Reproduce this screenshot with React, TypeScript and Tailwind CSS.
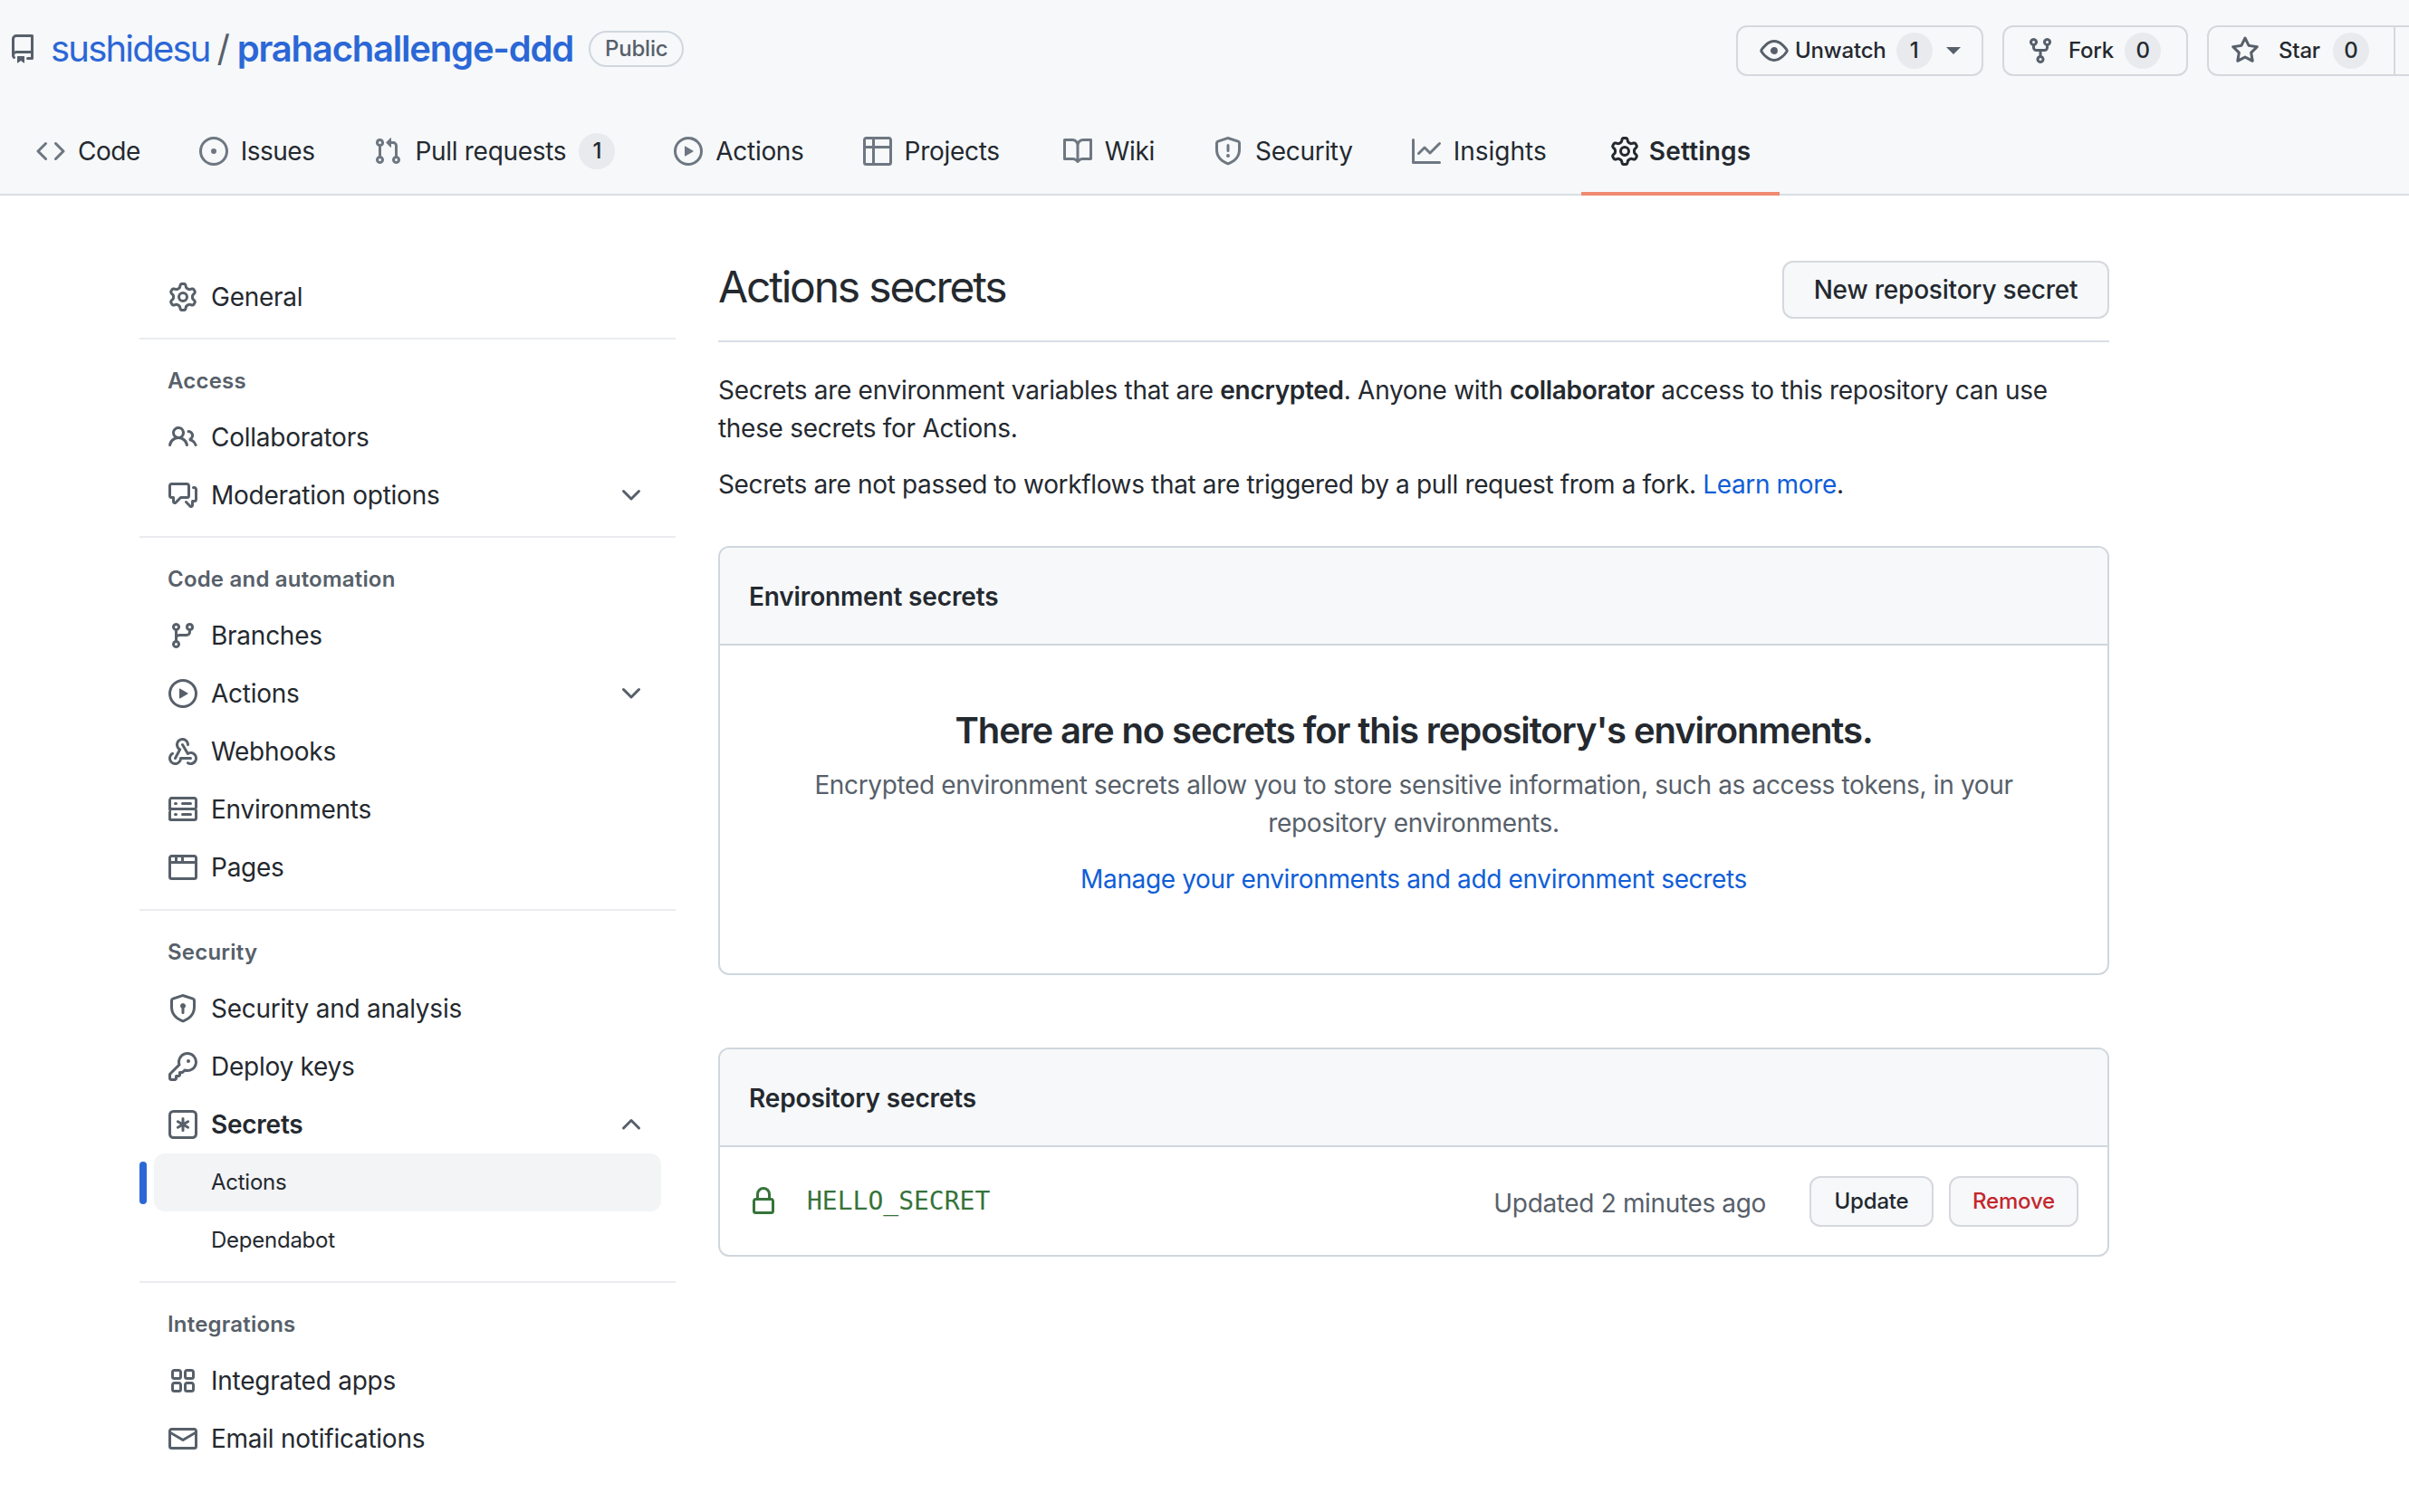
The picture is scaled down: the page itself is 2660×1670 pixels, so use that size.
import React from 'react';

const paths: Record<string, string> = {
  repo: 'M2 2.5A2.5 2.5 0 0 1 4.5 0h8.75a.75.75 0 0 1 .75.75v12.5a.75.75 0 0 1-.75.75h-2.5a.75.75 0 0 1 0-1.5h1.75v-2h-8a1 1 0 0 0-.714 1.7.75.75 0 1 1-1.072 1.05A2.495 2.495 0 0 1 2 11.5Zm10.5-1h-8a1 1 0 0 0-1 1v6.708A2.486 2.486 0 0 1 4.5 9h8ZM5 12.25a.25.25 0 0 1 .25-.25h3.5a.25.25 0 0 1 .25.25v3.25a.25.25 0 0 1-.4.2l-1.45-1.087a.249.249 0 0 0-.3 0L5.4 15.7a.25.25 0 0 1-.4-.2Z',
  code: 'm11.28 3.22 4.25 4.25a.75.75 0 0 1 0 1.06l-4.25 4.25a.749.749 0 0 1-1.275-.326.749.749 0 0 1 .215-.734L13.94 8l-3.72-3.72a.749.749 0 0 1 .326-1.275.749.749 0 0 1 .734.215Zm-6.56 0a.751.751 0 0 1 1.042.018.751.751 0 0 1 .018 1.042L2.06 8l3.72 3.72a.749.749 0 0 1-.326 1.275.749.749 0 0 1-.734-.215L.47 8.53a.75.75 0 0 1 0-1.06Z',
  issue: 'M8 9.5a1.5 1.5 0 1 0 0-3 1.5 1.5 0 0 0 0 3Z M8 0a8 8 0 1 1 0 16A8 8 0 0 1 8 0ZM1.5 8a6.5 6.5 0 1 0 13 0 6.5 6.5 0 0 0-13 0Z',
  pull: 'M1.5 3.25a2.25 2.25 0 1 1 3 2.122v5.256a2.251 2.251 0 1 1-1.5 0V5.372A2.25 2.25 0 0 1 1.5 3.25Zm5.677-.177L9.573.677A.25.25 0 0 1 10 .854V2.5h1A2.5 2.5 0 0 1 13.5 5v5.628a2.251 2.251 0 1 1-1.5 0V5a1 1 0 0 0-1-1h-1v1.646a.25.25 0 0 1-.427.177L7.177 3.427a.25.25 0 0 1 0-.354ZM3.75 2.5a.75.75 0 1 0 0 1.5.75.75 0 0 0 0-1.5Zm0 9.5a.75.75 0 1 0 0 1.5.75.75 0 0 0 0-1.5Zm8.25.75a.75.75 0 1 0 1.5 0 .75.75 0 0 0-1.5 0Z',
  play: 'M8 0a8 8 0 1 1 0 16A8 8 0 0 1 8 0ZM1.5 8a6.5 6.5 0 1 0 13 0 6.5 6.5 0 0 0-13 0Zm4.879-2.773 4.264 2.559a.25.25 0 0 1 0 .428l-4.264 2.559A.25.25 0 0 1 6 10.559V5.442a.25.25 0 0 1 .379-.215Z',
  table: 'M0 1.75C0 .784.784 0 1.75 0h12.5C15.216 0 16 .784 16 1.75v12.5A1.75 1.75 0 0 1 14.25 16H1.75A1.75 1.75 0 0 1 0 14.25ZM6.5 6.5v8h7.75a.25.25 0 0 0 .25-.25V6.5Zm8-1.5V1.75a.25.25 0 0 0-.25-.25H6.5V5Zm-13 1.5v7.75c0 .138.112.25.25.25H5v-8ZM5 5V1.5H1.75a.25.25 0 0 0-.25.25V5Z',
  book: 'M0 1.75A.75.75 0 0 1 .75 1h4.253c1.227 0 2.317.59 3 1.501A3.743 3.743 0 0 1 11.006 1h4.245a.75.75 0 0 1 .75.75v10.5a.75.75 0 0 1-.75.75h-4.507a2.25 2.25 0 0 0-1.591.659l-.622.621a.75.75 0 0 1-1.06 0l-.622-.621A2.25 2.25 0 0 0 5.258 13H.75a.75.75 0 0 1-.75-.75Zm7.251 10.324.004-5.073-.002-2.253A2.25 2.25 0 0 0 5.003 2.5H1.5v9h3.757a3.75 3.75 0 0 1 1.994.574ZM8.755 4.75l-.004 7.322a3.752 3.752 0 0 1 1.992-.572H14.5v-9h-3.495a2.25 2.25 0 0 0-2.25 2.25Z',
  shield: 'M7.467.133a1.748 1.748 0 0 1 1.066 0l5.25 1.68A1.75 1.75 0 0 1 15 3.48V7c0 1.566-.32 3.182-1.303 4.682-.983 1.498-2.585 2.813-5.032 3.855a1.697 1.697 0 0 1-1.33 0c-2.447-1.042-4.049-2.357-5.032-3.855C1.32 10.182 1 8.566 1 7V3.48a1.75 1.75 0 0 1 1.217-1.667Zm.61 1.429a.25.25 0 0 0-.153 0l-5.25 1.68a.25.25 0 0 0-.174.238V7c0 1.358.275 2.666 1.057 3.86.784 1.194 2.121 2.34 4.366 3.297a.196.196 0 0 0 .154 0c2.245-.956 3.582-2.104 4.366-3.298C13.225 9.666 13.5 8.36 13.5 7V3.48a.251.251 0 0 0-.174-.237l-5.25-1.68ZM8.75 4.75v3a.75.75 0 0 1-1.5 0v-3a.75.75 0 0 1 1.5 0ZM9 10.5a1 1 0 1 1-2 0 1 1 0 0 1 2 0Z',
  graph: 'M1.5 1.75V13.5h13.75a.75.75 0 0 1 0 1.5H.75a.75.75 0 0 1-.75-.75V1.75a.75.75 0 0 1 1.5 0Zm14.28 2.53-5.25 5.25a.75.75 0 0 1-1.06 0L7 7.06 4.28 9.78a.751.751 0 0 1-1.042-.018.751.751 0 0 1-.018-1.042l3.25-3.25a.75.75 0 0 1 1.06 0L10 7.94l4.72-4.72a.751.751 0 0 1 1.042.018.751.751 0 0 1 .018 1.042Z',
  gear: 'M8 0a8.2 8.2 0 0 1 .701.031C9.444.095 9.99.645 10.16 1.29l.288 1.107c.018.066.079.158.212.224.231.114.454.243.668.386.123.082.233.09.299.071l1.103-.303c.644-.176 1.392.021 1.82.63.27.385.506.792.704 1.218.315.675.111 1.422-.364 1.891l-.814.806c-.049.048-.098.147-.088.294.016.257.016.515 0 .772-.01.147.038.246.088.294l.814.806c.475.469.679 1.216.364 1.891a7.977 7.977 0 0 1-.704 1.217c-.428.61-1.176.807-1.82.63l-1.102-.302c-.067-.019-.177-.011-.3.071a5.909 5.909 0 0 1-.668.386c-.133.066-.194.158-.211.224l-.29 1.106c-.168.646-.715 1.196-1.458 1.26a8.006 8.006 0 0 1-1.402 0c-.743-.064-1.289-.614-1.458-1.26l-.289-1.106c-.018-.066-.079-.158-.212-.224a5.738 5.738 0 0 1-.668-.386c-.123-.082-.233-.09-.299-.071l-1.103.303c-.644.176-1.392-.021-1.82-.63a8.12 8.12 0 0 1-.704-1.218c-.315-.675-.111-1.422.363-1.891l.815-.806c.05-.048.098-.147.088-.294a6.214 6.214 0 0 1 0-.772c.01-.147-.038-.246-.088-.294l-.815-.806C.635 6.045.431 5.298.746 4.623a7.92 7.92 0 0 1 .704-1.217c.428-.61 1.176-.807 1.82-.63l1.102.302c.067.019.177.011.3-.071.214-.143.437-.272.668-.386.133-.066.194-.158.211-.224l.29-1.106C6.009.645 6.556.095 7.299.03 7.53.01 7.764 0 8 0Zm-.571 1.525c-.036.003-.108.036-.137.146l-.289 1.105c-.147.561-.549.967-.998 1.189-.173.086-.34.183-.5.29-.417.278-.97.423-1.529.27l-1.103-.303c-.109-.03-.175.016-.195.045-.22.312-.412.644-.573.99-.014.031-.021.11.059.19l.815.806c.411.406.562.957.53 1.456a4.709 4.709 0 0 0 0 .582c.032.499-.119 1.05-.53 1.456l-.815.806c-.081.08-.073.159-.059.19.162.346.353.677.573.989.02.03.085.076.195.046l1.102-.303c.56-.153 1.113-.008 1.53.27.161.107.328.204.501.29.447.222.85.629.997 1.189l.289 1.105c.029.109.101.143.137.146a6.6 6.6 0 0 0 1.142 0c.036-.003.108-.036.137-.146l.289-1.105c.147-.561.549-.967.998-1.189.173-.086.34-.183.5-.29.417-.278.97-.423 1.529-.27l1.103.303c.109.029.175-.016.195-.045.22-.313.411-.644.573-.99.014-.031.021-.11-.059-.19l-.815-.806c-.411-.406-.562-.957-.53-1.456a4.709 4.709 0 0 0 0-.582c-.032-.499.119-1.05.53-1.456l.815-.806c.081-.08.073-.159.059-.19a6.464 6.464 0 0 0-.573-.989c-.02-.03-.085-.076-.195-.046l-1.102.303c-.56.153-1.113.008-1.53-.27a4.44 4.44 0 0 0-.501-.29c-.447-.222-.85-.629-.997-1.189l-.289-1.105c-.029-.11-.101-.143-.137-.146a6.6 6.6 0 0 0-1.142 0ZM11 8a3 3 0 1 1-6 0 3 3 0 0 1 6 0ZM9.5 8a1.5 1.5 0 1 0-3.001.001A1.5 1.5 0 0 0 9.5 8Z',
  eye: 'M8 2c1.981 0 3.671.992 4.933 2.078 1.27 1.091 2.187 2.345 2.637 3.023a1.62 1.62 0 0 1 0 1.798c-.45.678-1.367 1.932-2.637 3.023C11.67 13.008 9.981 14 8 14c-1.981 0-3.671-.992-4.933-2.078C1.797 10.83.88 9.576.43 8.898a1.62 1.62 0 0 1 0-1.798c.45-.677 1.367-1.931 2.637-3.022C4.33 2.992 6.019 2 8 2ZM1.679 7.932a.12.12 0 0 0 0 .136c.411.622 1.241 1.75 2.366 2.717C5.176 11.758 6.527 12.5 8 12.5c1.473 0 2.825-.742 3.955-1.715 1.124-.967 1.954-2.096 2.366-2.717a.12.12 0 0 0 0-.136c-.412-.621-1.242-1.75-2.366-2.717C10.824 4.242 9.473 3.5 8 3.5c-1.473 0-2.825.742-3.955 1.715-1.124.967-1.954 2.096-2.366 2.717ZM8 10a2 2 0 1 1-.001-3.999A2 2 0 0 1 8 10Z',
  fork: 'M5 5.372v.878c0 .414.336.75.75.75h4.5a.75.75 0 0 0 .75-.75v-.878a2.25 2.25 0 1 1 1.5 0v.878a2.25 2.25 0 0 1-2.25 2.25h-1.5v2.128a2.251 2.251 0 1 1-1.5 0V8.5h-1.5A2.25 2.25 0 0 1 3.5 6.25v-.878a2.25 2.25 0 1 1 1.5 0ZM5 3.25a.75.75 0 1 0-1.5 0 .75.75 0 0 0 1.5 0Zm6.75.75a.75.75 0 1 0 0-1.5.75.75 0 0 0 0 1.5Zm-3 8.75a.75.75 0 1 0-1.5 0 .75.75 0 0 0 1.5 0Z',
  star: 'M8 .25a.75.75 0 0 1 .673.418l1.882 3.815 4.21.612a.75.75 0 0 1 .416 1.279l-3.046 2.97.719 4.192a.751.751 0 0 1-1.088.791L8 12.347l-3.766 1.98a.75.75 0 0 1-1.088-.79l.72-4.194L.818 6.374a.75.75 0 0 1 .416-1.28l4.21-.611L7.327.668A.75.75 0 0 1 8 .25Zm0 2.445L6.615 5.5a.75.75 0 0 1-.564.41l-3.097.45 2.24 2.184a.75.75 0 0 1 .216.664l-.528 3.084 2.769-1.456a.75.75 0 0 1 .698 0l2.77 1.456-.53-3.084a.75.75 0 0 1 .216-.664l2.24-2.183-3.096-.45a.75.75 0 0 1-.564-.41L8 2.694Z',
  people: 'M2 5.5a3.5 3.5 0 1 1 5.898 2.549 5.508 5.508 0 0 1 3.034 4.084.75.75 0 1 1-1.482.235 4 4 0 0 0-7.9 0 .75.75 0 0 1-1.482-.236A5.507 5.507 0 0 1 3.102 8.05 3.493 3.493 0 0 1 2 5.5ZM11 4a3.001 3.001 0 0 1 2.22 5.018 5.01 5.01 0 0 1 2.56 3.012.749.749 0 0 1-.885.954.752.752 0 0 1-.549-.514 3.507 3.507 0 0 0-2.522-2.372.75.75 0 0 1-.574-.73v-.352a.75.75 0 0 1 .416-.672A1.5 1.5 0 0 0 11 5.5.75.75 0 0 1 11 4Zm-5.5-.5a2 2 0 1 0-.001 3.999A2 2 0 0 0 5.5 3.5Z',
  discussion: 'M1.75 1h8.5c.966 0 1.75.784 1.75 1.75v5.5A1.75 1.75 0 0 1 10.25 10H7.061l-2.574 2.573A1.458 1.458 0 0 1 2 11.543V10h-.25A1.75 1.75 0 0 1 0 8.25v-5.5C0 1.784.784 1 1.75 1ZM1.5 2.75v5.5c0 .138.112.25.25.25h1a.75.75 0 0 1 .75.75v2.19l2.72-2.72a.749.749 0 0 1 .53-.22h3.5a.25.25 0 0 0 .25-.25v-5.5a.25.25 0 0 0-.25-.25h-8.5a.25.25 0 0 0-.25.25Zm13 2a.25.25 0 0 0-.25-.25h-.5a.75.75 0 0 1 0-1.5h.5c.966 0 1.75.784 1.75 1.75v5.5A1.75 1.75 0 0 1 14.25 12H14v1.543a1.458 1.458 0 0 1-2.487 1.03L9.22 12.28a.749.749 0 0 1 .326-1.275.749.749 0 0 1 .734.215l2.22 2.22v-2.19a.75.75 0 0 1 .75-.75h1a.25.25 0 0 0 .25-.25Z',
  branch: 'M9.5 3.25a2.25 2.25 0 1 1 3 2.122V6A2.5 2.5 0 0 1 10 8.5H6a1 1 0 0 0-1 1v1.128a2.251 2.251 0 1 1-1.5 0V5.372a2.25 2.25 0 1 1 1.5 0v1.836A2.493 2.493 0 0 1 6 7h4a1 1 0 0 0 1-1v-.628A2.25 2.25 0 0 1 9.5 3.25Zm-6 0a.75.75 0 1 0 1.5 0 .75.75 0 0 0-1.5 0Zm8.25-.75a.75.75 0 1 0 0 1.5.75.75 0 0 0 0-1.5ZM4.25 12a.75.75 0 1 0 0 1.5.75.75 0 0 0 0-1.5Z',
  webhook: 'M5.5 4.25a2.25 2.25 0 0 1 4.5 0 .75.75 0 0 0 1.5 0 3.75 3.75 0 1 0-6.14 2.889l-2.272 4.258a.75.75 0 0 0 1.324.706L7 7.25a.75.75 0 0 0-.309-1.015A2.25 2.25 0 0 1 5.5 4.25Z M7.364 3.607a.75.75 0 0 1 1.03.257l2.608 4.349a3.75 3.75 0 1 1-.628 6.785.75.75 0 0 1 .752-1.299 2.25 2.25 0 1 0-.033-3.88.75.75 0 0 1-1.03-.256L7.107 4.636a.75.75 0 0 1 .257-1.03Z M2.9 8.776A.75.75 0 0 1 2.625 9.8 2.25 2.25 0 1 0 6 11.75a.75.75 0 0 1 .75-.751h5.5a.75.75 0 0 1 0 1.5H7.425a3.751 3.751 0 1 1-5.55-3.998.75.75 0 0 1 1.024.274Z',
  server: 'M1.75 1h12.5c.966 0 1.75.784 1.75 1.75v4c0 .372-.116.717-.314 1 .198.283.314.628.314 1v4a1.75 1.75 0 0 1-1.75 1.75H1.75A1.75 1.75 0 0 1 0 13.75v-4c0-.372.116-.717.314-1a1.739 1.739 0 0 1-.314-1v-4C0 1.784.784 1 1.75 1ZM1.5 2.75v4c0 .138.112.25.25.25h12.5a.25.25 0 0 0 .25-.25v-4a.25.25 0 0 0-.25-.25H1.75a.25.25 0 0 0-.25.25Zm.25 5.75a.25.25 0 0 0-.25.25v4c0 .138.112.25.25.25h12.5a.25.25 0 0 0 .25-.25v-4a.25.25 0 0 0-.25-.25ZM7 4.75A.75.75 0 0 1 7.75 4h4.5a.75.75 0 0 1 0 1.5h-4.5A.75.75 0 0 1 7 4.75ZM7.75 10h4.5a.75.75 0 0 1 0 1.5h-4.5a.75.75 0 0 1 0-1.5ZM3 4.75A.75.75 0 0 1 3.75 4h.5a.75.75 0 0 1 0 1.5h-.5A.75.75 0 0 1 3 4.75ZM3.75 10h.5a.75.75 0 0 1 0 1.5h-.5a.75.75 0 0 1 0-1.5Z',
  browser: 'M0 2.75C0 1.784.784 1 1.75 1h12.5c.966 0 1.75.784 1.75 1.75v10.5A1.75 1.75 0 0 1 14.25 15H1.75A1.75 1.75 0 0 1 0 13.25ZM14.5 6h-13v7.25c0 .138.112.25.25.25h12.5a.25.25 0 0 0 .25-.25Zm-6-3.5v2h6V2.75a.25.25 0 0 0-.25-.25ZM5 2.5v2h2v-2Zm-3.25 0a.25.25 0 0 0-.25.25V4.5h2v-2Z',
  shieldLock: 'M7.467.133a1.748 1.748 0 0 1 1.066 0l5.25 1.68A1.75 1.75 0 0 1 15 3.48V7c0 1.566-.32 3.182-1.303 4.682-.983 1.498-2.585 2.813-5.032 3.855a1.697 1.697 0 0 1-1.33 0c-2.447-1.042-4.049-2.357-5.032-3.855C1.32 10.182 1 8.566 1 7V3.48a1.75 1.75 0 0 1 1.217-1.667Zm.61 1.429a.25.25 0 0 0-.153 0l-5.25 1.68a.25.25 0 0 0-.174.238V7c0 1.358.275 2.666 1.057 3.86.784 1.194 2.121 2.34 4.366 3.297a.196.196 0 0 0 .154 0c2.245-.956 3.582-2.104 4.366-3.298C13.225 9.666 13.5 8.36 13.5 7V3.48a.251.251 0 0 0-.174-.237l-5.25-1.68ZM9.5 6.5c0 .536-.286 1.032-.75 1.3v2.45a.75.75 0 0 1-1.5 0V7.8A1.5 1.5 0 1 1 9.5 6.5Z',
  key: 'M10.5 0a5.499 5.499 0 1 1-1.288 10.848l-.932.932a.749.749 0 0 1-.53.22H7v.75a.749.749 0 0 1-.22.53l-.5.5a.749.749 0 0 1-.53.22H5v.75a.749.749 0 0 1-.22.53l-.5.5a.749.749 0 0 1-.53.22h-2A1.75 1.75 0 0 1 0 14.25v-2c0-.199.079-.389.22-.53l4.932-4.932A5.5 5.5 0 0 1 10.5 0Zm-4 5.5c-.001.431.069.86.205 1.269a.75.75 0 0 1-.181.768L1.5 12.56v1.69c0 .138.112.25.25.25h1.69l.06-.06v-1.19a.75.75 0 0 1 .75-.75h1.19l.06-.06v-1.19a.75.75 0 0 1 .75-.75h1.19l1.023-1.025a.75.75 0 0 1 .768-.18A4 4 0 1 0 6.5 5.5ZM11 6a1 1 0 1 1 0-2 1 1 0 0 1 0 2Z',
  asterisk: 'M0 2.75A2.75 2.75 0 0 1 2.75 0h10.5A2.75 2.75 0 0 1 16 2.75v10.5A2.75 2.75 0 0 1 13.25 16H2.75A2.75 2.75 0 0 1 0 13.25ZM2.75 1.5c-.69 0-1.25.56-1.25 1.25v10.5c0 .69.56 1.25 1.25 1.25h10.5c.69 0 1.25-.56 1.25-1.25V2.75c0-.69-.56-1.25-1.25-1.25Z M8 4a.75.75 0 0 1 .75.75V6.7l1.69-.975a.75.75 0 0 1 .75 1.3L9.5 8l1.69.976a.75.75 0 0 1-.75 1.298L8.75 9.3v1.951a.75.75 0 0 1-1.5 0V9.299l-1.69.975a.75.75 0 0 1-.75-1.3L6.5 8l-1.69-.975a.75.75 0 0 1 .75-1.3l1.69.976V4.75A.75.75 0 0 1 8 4Z',
  apps: 'M1.5 3.25c0-.966.784-1.75 1.75-1.75h2.5c.966 0 1.75.784 1.75 1.75v2.5A1.75 1.75 0 0 1 5.75 7.5h-2.5A1.75 1.75 0 0 1 1.5 5.75Zm7 0c0-.966.784-1.75 1.75-1.75h2.5c.966 0 1.75.784 1.75 1.75v2.5a1.75 1.75 0 0 1-1.75 1.75h-2.5A1.75 1.75 0 0 1 8.5 5.75Zm-7 7c0-.966.784-1.75 1.75-1.75h2.5c.966 0 1.75.784 1.75 1.75v2.5a1.75 1.75 0 0 1-1.75 1.75h-2.5a1.75 1.75 0 0 1-1.75-1.75Zm7 0c0-.966.784-1.75 1.75-1.75h2.5c.966 0 1.75.784 1.75 1.75v2.5a1.75 1.75 0 0 1-1.75 1.75h-2.5a1.75 1.75 0 0 1-1.75-1.75ZM3.25 3a.25.25 0 0 0-.25.25v2.5c0 .138.112.25.25.25h2.5A.25.25 0 0 0 6 5.75v-2.5A.25.25 0 0 0 5.75 3Zm7 0a.25.25 0 0 0-.25.25v2.5c0 .138.112.25.25.25h2.5a.25.25 0 0 0 .25-.25v-2.5a.25.25 0 0 0-.25-.25Zm-7 7a.25.25 0 0 0-.25.25v2.5c0 .138.112.25.25.25h2.5a.25.25 0 0 0 .25-.25v-2.5a.25.25 0 0 0-.25-.25Zm7 0a.25.25 0 0 0-.25.25v2.5c0 .138.112.25.25.25h2.5a.25.25 0 0 0 .25-.25v-2.5a.25.25 0 0 0-.25-.25Z',
  mail: 'M1.75 2h12.5c.966 0 1.75.784 1.75 1.75v8.5A1.75 1.75 0 0 1 14.25 14H1.75A1.75 1.75 0 0 1 0 12.25v-8.5C0 2.784.784 2 1.75 2ZM1.5 12.251c0 .138.112.25.25.25h12.5a.25.25 0 0 0 .25-.25V5.809L8.38 9.397a.75.75 0 0 1-.76 0L1.5 5.809v6.442Zm13-8.181v-.32a.25.25 0 0 0-.25-.25H1.75a.25.25 0 0 0-.25.25v.32L8 7.88Z',
  lock: 'M4 4a4 4 0 0 1 8 0v2h.25c.966 0 1.75.784 1.75 1.75v5.5A1.75 1.75 0 0 1 12.25 15h-8.5A1.75 1.75 0 0 1 2 13.25v-5.5C2 6.784 2.784 6 3.75 6H4Zm8.25 3.5h-8.5a.25.25 0 0 0-.25.25v5.5c0 .138.112.25.25.25h8.5a.25.25 0 0 0 .25-.25v-5.5a.25.25 0 0 0-.25-.25ZM10.5 6V4a2.5 2.5 0 1 0-5 0v2Z',
  chevronDown: 'M12.78 5.22a.749.749 0 0 1 0 1.06l-4.25 4.25a.749.749 0 0 1-1.06 0L3.22 6.28a.749.749 0 1 1 1.06-1.06L8 8.939l3.72-3.719a.749.749 0 0 1 1.06 0Z',
  chevronUp: 'M3.22 10.53a.749.749 0 0 1 0-1.06l4.25-4.25a.749.749 0 0 1 1.06 0l4.25 4.25a.749.749 0 1 1-1.06 1.06L8 6.811 4.28 10.53a.749.749 0 0 1-1.06 0Z',
};

const Icon: React.FC<{ name: string; className?: string }> = ({ name, className }) => (
  <svg viewBox="0 0 16 16" fill="currentColor" className={`w-8 h-8 shrink-0 ${className ?? ''}`}>
    <path d={paths[name]} />
  </svg>
);

const tabs = [
  { icon: 'code', label: 'Code', extra: 'tracking-[-0.5px]' },
  { icon: 'issue', label: 'Issues', extra: 'tracking-[-0.5px]' },
  { icon: 'pull', label: 'Pull requests', count: '1' },
  { icon: 'play', label: 'Actions' },
  { icon: 'table', label: 'Projects' },
  { icon: 'book', label: 'Wiki', extra: 'ml-[5px]' },
  { icon: 'shield', label: 'Security' },
  { icon: 'graph', label: 'Insights', extra: 'tracking-normal' },
  { icon: 'gear', label: 'Settings', active: true, extra: 'ml-[5px]' },
];

const Counter: React.FC<{ value: string }> = ({ value }) => (
  <span className="w-10 h-10 rounded-full bg-[#e8eaed] flex items-center justify-center text-[24px] font-medium text-[#24292f]">
    {value}
  </span>
);

const Header: React.FC = () => (
  <header className="bg-[#f6f8fa] h-[216px] flex flex-col">
    <div className="flex items-center justify-between h-[56px] mt-[28px] pl-[9px]">
      <div className="flex items-center mb-[4px]">
        <Icon name="repo" className="text-[#57606a]" />
        <a className="ml-[15px] text-[40px] leading-[56px] tracking-[-1.8px] text-[#2b67d6]">sushidesu</a>
        <span className="mx-[8px] text-[40px] leading-[56px] text-[#57606a]">/</span>
        <a className="text-[40px] leading-[56px] tracking-[-1.2px] font-semibold text-[#2b67d6]">prahachallenge-ddd</a>
        <span className="ml-[17px] h-10 px-[16px] rounded-full border-2 border-[#d0d7de] flex items-center text-[24px] font-medium tracking-[-0.2px] text-[#57606a]">
          Public
        </span>
      </div>
      <div className="flex items-center gap-[21px] -mr-[60px] tracking-[-0.2px]">
        <button className="h-[56px] w-[273px] rounded-[12px] border-2 border-[#d5d8dc] bg-[#f6f8fa] flex items-center pl-[24px] gap-[7px] text-[24px] font-medium text-[#24292f]">
          <Icon name="eye" className="text-[#57606a]" />
          Unwatch
          <span className="ml-[4px]"><Counter value="1" /></span>
          <span className="ml-[8px] w-0 h-0 border-x-[8px] border-x-transparent border-t-[8px] border-t-[#57606a]" />
        </button>
        <button className="h-[56px] w-[205px] rounded-[12px] border-2 border-[#d5d8dc] bg-[#f6f8fa] flex items-center pl-[24px] gap-[12px] text-[24px] font-medium text-[#24292f]">
          <Icon name="fork" className="text-[#57606a]" />
          <span className="ml-[3px]">Fork</span>
          <Counter value="0" />
        </button>
        <div className="h-[56px] w-[283px] rounded-[12px] border-2 border-[#d5d8dc] bg-[#f6f8fa] flex items-center">
          <div className="h-full w-[206px] border-r-2 border-[#d5d8dc] flex items-center pl-[24px] gap-[14px] text-[24px] font-medium text-[#24292f]">
            <Icon name="star" className="text-[#57606a]" />
            <span className="ml-[7px]">Star</span>
            <Counter value="0" />
          </div>
        </div>
      </div>
    </div>
    <nav className="flex items-stretch mt-auto pl-[8px] gap-[1px] h-[94px] border-b-2 border-[#d8dee4]">
      {tabs.map(t => (
        <a
          key={t.label}
          className={`flex items-center px-[32px] text-[28px] text-[#24292f] border-b-4 -mb-[2px] ${t.extra ?? ''} ${t.active ? 'gap-[11px] border-[#ee8a70] font-semibold tracking-[0.2px]' : 'gap-[14px] border-transparent'}`}
        >
          <Icon name={t.icon} className={t.active ? 'text-[#24292f]' : 'text-[#6e7781]'} />
          {t.label}
          {t.count && <Counter value={t.count} />}
        </a>
      ))}
    </nav>
  </header>
);

type NavItem = { icon?: string; label: string; chevron?: 'down' | 'up'; bold?: boolean; active?: boolean };
const sections: { title?: string; items: NavItem[] }[] = [
  { items: [{ icon: 'gear', label: 'General' }] },
  {
    title: 'Access',
    items: [
      { icon: 'people', label: 'Collaborators' },
      { icon: 'discussion', label: 'Moderation options', chevron: 'down' },
    ],
  },
  {
    title: 'Code and automation',
    items: [
      { icon: 'branch', label: 'Branches' },
      { icon: 'play', label: 'Actions', chevron: 'down' },
      { icon: 'webhook', label: 'Webhooks' },
      { icon: 'server', label: 'Environments' },
      { icon: 'browser', label: 'Pages' },
    ],
  },
  {
    title: 'Security',
    items: [
      { icon: 'shieldLock', label: 'Security and analysis' },
      { icon: 'key', label: 'Deploy keys' },
      { icon: 'asterisk', label: 'Secrets', chevron: 'up', bold: true },
      { label: 'Actions', active: true },
      { label: 'Dependabot' },
    ],
  },
  {
    title: 'Integrations',
    items: [
      { icon: 'apps', label: 'Integrated apps' },
      { icon: 'mail', label: 'Email notifications' },
    ],
  },
];

const SidebarRow: React.FC<{ item: NavItem }> = ({ item }) => {
  const sub = !item.icon;
  return (
    <div className="relative h-16 pl-4 pr-4">
      {item.active && <span className="absolute left-0 top-[9px] w-2 h-[47px] rounded-full bg-[#2b67d6]" />}
      <div className={`h-full rounded-[12px] flex items-center pl-[15px] pr-[17px] ${item.active ? 'bg-[#f3f4f6]' : ''}`}>
        {item.icon ? <Icon name={item.icon} className="text-[#57606a] ml-[1px]" /> : <span className="w-[33px] shrink-0" />}
        <span className={`ml-[15px] text-[#24292f] ${sub ? 'text-[24px]' : 'text-[28px]'} ${item.bold ? 'font-semibold' : ''}`}>
          {item.label}
        </span>
        {item.chevron && (
          <Icon name={item.chevron === 'down' ? 'chevronDown' : 'chevronUp'} className="ml-auto text-[#57606a]" />
        )}
      </div>
    </div>
  );
};

const Sidebar: React.FC = () => (
  <aside className="w-[592px] shrink-0 pt-[8px] tracking-[-0.25px]">
    {sections.map((s, i) => (
      <div key={i} className={`pb-[13px] ${i === 2 ? 'pb-[14px]' : ''} ${i < sections.length - 1 ? 'border-b-2 border-[#eaecef]' : ''}`}>
        {s.title && (
          <h3 className="pt-[28px] pb-[12px] pl-[31px] text-[24px] leading-[36px] font-semibold tracking-[0.2px] text-[#57606a]">{s.title}</h3>
        )}
        {s.items.map(item => (
          <SidebarRow key={item.label + (item.active ? '-sub' : '')} item={item} />
        ))}
      </div>
    ))}
  </aside>
);

const BoxHeader: React.FC<{ title: string }> = ({ title }) => (
  <div className="h-[108px] pt-[2px] bg-[#f6f8fa] border-b-2 border-[#d0d7de] rounded-t-[10px] flex items-center px-8 text-[28px] font-semibold tracking-[-0.15px] text-[#24292f]">
    {title}
  </div>
);

const Main: React.FC = () => (
  <main className="flex-1 min-w-0 text-[#24292f] tracking-[-0.35px]">
    <div className="h-[90px] border-b-2 border-[#d8dee4] flex items-start justify-between">
      <h2 className="text-[48px] leading-[58px] tracking-[-2.2px]">Actions secrets</h2>
      <button className="h-16 w-[361px] rounded-[12px] border-2 border-[#d5d8dc] bg-[#f6f8fa] text-[28px] font-medium tracking-[-0.2px]">
        New repository secret
      </button>
    </div>
    <p className="mt-[32px] text-[28px] leading-[42px] tracking-[-0.3px]">
      Secrets are environment variables that are <strong className="font-semibold">encrypted</strong>. Anyone with{' '}
      <strong className="font-semibold">collaborator</strong> access to this repository can use these secrets for Actions.
    </p>
    <p className="mt-[20px] text-[28px] leading-[42px]">
      Secrets are not passed to workflows that are triggered by a pull request from a fork.{' '}
      <a className="text-[#0f5ed7]">Learn more</a>.
    </p>

    <section className="mt-[47px] border-2 border-[#d0d7de] rounded-[12px] h-[474px]">
      <BoxHeader title="Environment secrets" />
      <div className="text-center px-[96px] pt-[64px]">
        <h3 className="text-[40px] leading-[60px] font-semibold tracking-[-1.1px]">There are no secrets for this repository's environments.</h3>
        <p className="mt-[9px] text-[28px] leading-[42px] text-[#57606a]">
          Encrypted environment secrets allow you to store sensitive information, such as access tokens, in your repository environments.
        </p>
        <a className="block mt-[20px] text-[28px] leading-[42px] text-[#0f5ed7]">Manage your environments and add environment secrets</a>
      </div>
    </section>

    <section className="mt-[80px] border-2 border-[#d0d7de] rounded-[12px]">
      <BoxHeader title="Repository secrets" />
      <div className="h-[119px] flex items-center pl-[32px] pr-[32px]">
        <Icon name="lock" className="text-[#36733a]" />
        <span className="ml-[32px] text-[28px] tracking-normal text-[#36733a] font-['DejaVu_Sans_Mono',monospace]">HELLO_SECRET</span>
        <span className="ml-auto text-[28px] text-[#57606a] mt-[4px]">Updated 2 minutes ago</span>
        <button className="ml-[48px] h-[56px] w-[137px] rounded-[12px] border-2 border-[#d5d8dc] bg-[#f6f8fa] text-[24px] font-medium tracking-[-0.2px]">
          Update
        </button>
        <button className="ml-[17px] h-[56px] w-[143px] rounded-[12px] border-2 border-[#d5d8dc] bg-[#f6f8fa] text-[24px] font-medium tracking-[-0.2px] text-[#c4272d]">
          Remove
        </button>
      </div>
    </section>
  </main>
);

const App: React.FC = () => (
  <div className="min-h-screen bg-white overflow-hidden font-['Inter',sans-serif] tracking-[-0.3px]">
    <Header />
    <div className="flex gap-[47px] pl-[154px] pr-[331px] pt-[72px]">
      <Sidebar />
      <Main />
    </div>
  </div>
);

export default App;
